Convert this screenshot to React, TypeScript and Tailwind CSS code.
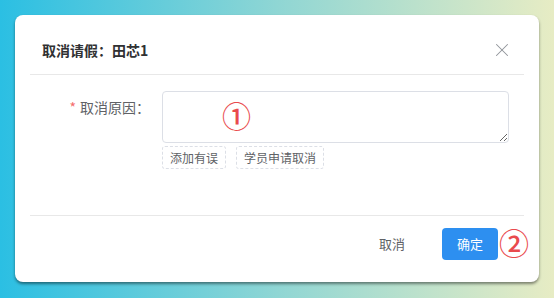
import { X } from 'lucide-react';

const quickReasons = ['添加有误', '学员申请取消'];

export default function App() {
  return (
    <div
      className="h-[298px] w-[554px] overflow-hidden bg-[linear-gradient(90deg,#2bbfe3_0%,#8fd6d4_50%,#e7ecc4_100%)] pl-[15px] pt-[15px]"
      style={{ fontFamily: '"Noto Sans CJK SC", "Noto Sans", sans-serif' }}
    >
      <div className="relative flex h-[267px] w-[524px] flex-col rounded-[8px] bg-white px-[15px] shadow-[0_2px_3px_rgba(0,0,0,0.45)]">
        <header className="flex h-[60px] items-center justify-between border-b border-[#e8e8e8] pl-[12px] pr-[11px] pt-[10px]">
          <h2 className="text-[14px] font-bold leading-[20px] text-[#303133]">取消请假：田芯1</h2>
          <X className="h-[22px] w-[22px] text-[#909399]" strokeWidth={1.1} />
        </header>

        <div className="flex h-[141px] border-b border-[#e8e8e8] pt-[16px]">
          <label className="flex h-[32px] w-[132px] shrink-0 items-center justify-end pr-[12px] text-[14px] text-[#606266]">
            <span className="mr-[4px] text-[#f56c6c]">*</span>
            取消原因：
          </label>
          <div className="flex flex-1 flex-col">
            <div className="relative">
              <textarea className="block h-[52px] w-[347px] resize-y rounded-[4px] border border-[#dcdfe6] px-[15px] py-[5px] text-[14px] outline-none" />
              <span className="pointer-events-none absolute left-[60px] top-[7px] text-[29px] font-medium leading-[34px] text-[#e94a4d]">①</span>
            </div>
            <div className="mt-[3px] flex gap-[10px]">
              {quickReasons.map((reason) => (
                <span
                  key={reason}
                  className="flex h-[23px] items-center rounded-[3px] border border-dashed border-[#dcdfe6] px-[7px] text-[12px] text-[#606266]"
                >
                  {reason}
                </span>
              ))}
            </div>
          </div>
        </div>

        <footer className="flex items-start justify-end pr-[26px] pt-[12px]">
          <button type="button" className="h-[32px] w-[56px] text-[13px] text-[#606266]">
            取消
          </button>
          <button
            type="button"
            className="ml-[22px] h-[32px] w-[56px] rounded-[4px] bg-[#2d8ff0] text-[13px] text-white"
          >
            确定
          </button>
          <span className="pointer-events-none absolute right-[10px] top-[209px] text-[30px] font-medium leading-[36px] text-[#e94a4d]">②</span>
        </footer>
      </div>
    </div>
  );
}
